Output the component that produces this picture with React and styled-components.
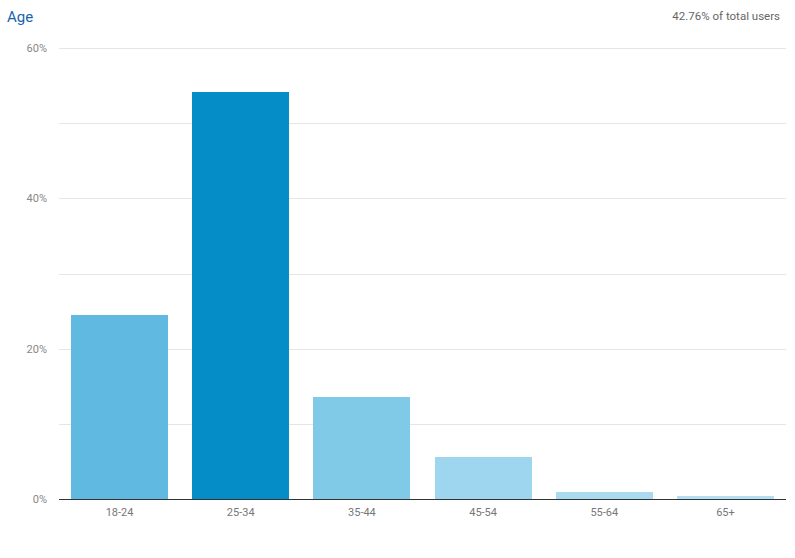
import React from "react";
import styled, { createGlobalStyle } from "styled-components";

const G = createGlobalStyle`
  body { margin:0; background:#fff; font-family: Roboto, "Liberation Sans", sans-serif; }
`;
const Page = styled.div`width:795px;height:558px;position:relative;`;
const Header = styled.div`display:flex;justify-content:space-between;align-items:flex-start;padding:8px 15px 0 7px;height:48px;box-sizing:border-box;`;
const Title = styled.div`font-size:15px;color:#1565a8;`;
const Sub = styled.div`font-size:11.5px;color:#666;margin-top:1px;`;
const Chart = styled.div`display:flex;`;
const YAxis = styled.div`width:59px;height:451px;position:relative;`;
const YLabel = styled.div`position:absolute;right:12px;font-size:11px;color:#888;transform:translateY(-50%);`;
const Plot = styled.div`width:727px;height:451px;display:flex;align-items:flex-end;border-bottom:1px solid #333;
  background: repeating-linear-gradient(to bottom,#e6e6e6 0,#e6e6e6 1px,transparent 1px,transparent 75.17px);`;
const Slot = styled.div`flex:1;display:flex;justify-content:center;height:100%;align-items:flex-end;`;
const Bar = styled.div`width:97px;background:${p=>p.c};`;
const XAxis = styled.div`display:flex;margin-left:59px;width:727px;padding-top:6px;`;
const XLabel = styled.div`flex:1;text-align:center;font-size:11px;color:#777;`;

const data = [
  ["18-24",24.5,"#5fb9e0"],["25-34",54.15,"#058dc7"],["35-44",13.6,"#80c9e7"],
  ["45-54",5.6,"#9fd6ef"],["55-64",0.9,"#a9daf0"],["65+",0.4,"#b4def2"],
];

export default function App(){
  return <Page><G/>
    <Header><Title>Age</Title><Sub>42.76% of total users</Sub></Header>
    <Chart>
      <YAxis>
        {[60,40,20,0].map(v=><YLabel key={v} style={{top:`${(60-v)/60*451}px`}}>{v}%</YLabel>)}
      </YAxis>
      <Plot>{data.map(([l,v,c])=><Slot key={l}><Bar c={c} style={{height:`${v*7.517}px`}}/></Slot>)}</Plot>
    </Chart>
    <XAxis>{data.map(([l])=><XLabel key={l}>{l}</XLabel>)}</XAxis>
  </Page>;
}
